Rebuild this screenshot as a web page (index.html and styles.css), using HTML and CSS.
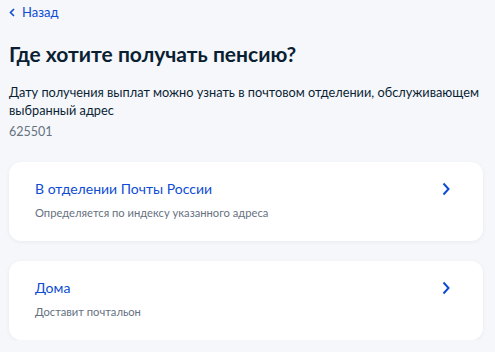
FILE: index.html
```html
<!DOCTYPE html>
<html lang="ru">
<head>
    <meta charset="UTF-8">
    <meta name="viewport" content="width=device-width, initial-scale=1.0">
    <title>Где хотите получать пенсию?</title>
    <link rel="stylesheet" href="styles.css">
</head>
<body>

<div class="page">
    <a class="back-link" href="#">
        <svg class="back-icon" width="6" height="9" viewBox="0 0 6 9">
            <path d="M5 1 L1.5 4.5 L5 8" fill="none" stroke="#0d4cd3" stroke-width="1.6"/>
        </svg>
        Назад
    </a>

    <h1 class="title">Где хотите получать пенсию?</h1>

    <p class="description">
        Дату получения выплат можно узнать в почтовом отделении, обслуживающем выбранный адрес
    </p>
    <div class="postcode">625501</div>

    <div class="options">
        <a class="option-card" href="#">
            <div class="option-text">
                <div class="option-title">В отделении Почты России</div>
                <div class="option-hint">Определяется по индексу указанного адреса</div>
            </div>
            <svg class="chevron" width="8" height="14" viewBox="0 0 8 14">
                <path d="M1.5 1.5 L6.5 7 L1.5 12.5" fill="none" stroke="#0d4cd3" stroke-width="2"/>
            </svg>
        </a>
        <a class="option-card" href="#">
            <div class="option-text">
                <div class="option-title">Дома</div>
                <div class="option-hint">Доставит почтальон</div>
            </div>
            <svg class="chevron" width="8" height="14" viewBox="0 0 8 14">
                <path d="M1.5 1.5 L6.5 7 L1.5 12.5" fill="none" stroke="#0d4cd3" stroke-width="2"/>
            </svg>
        </a>
    </div>
</div>

</body>
</html>
```

FILE: styles.css
```css
body {
    font-family: Lato, "Noto Sans", sans-serif;
    background-color: #f5f7fb;
    color: #0b1f33;
    margin: 0;
    padding: 0;
}

.page {
    padding: 2px 12px 0 9px;
}

.back-link {
    display: flex;
    align-items: center;
    gap: 7px;
    height: 20px;
    font-size: 13px;
    color: #0d4cd3;
    text-decoration: none;
}

/* Heading */
.title {
    font-size: 21px;
    font-weight: bold;
    line-height: 28px;
    margin: 18px 0 0 0;
}

.description {
    font-size: 12.75px;
    line-height: 18px;
    margin: 15px 0 0 0;
}

.postcode {
    font-size: 12.5px;
    line-height: 20px;
    color: #66727f;
    margin-top: 3px;
}

/* Option cards */
.options {
    display: flex;
    flex-direction: column;
    gap: 20px;
    margin-top: 20px;
}

.option-card {
    display: flex;
    justify-content: space-between;
    align-items: flex-start;
    background-color: #fff;
    border-radius: 12px;
    padding: 17px 33px 20px 26px;
    box-shadow: 0 1px 4px rgba(11, 31, 51, 0.06);
    text-decoration: none;
}

.option-title {
    font-size: 14px;
    line-height: 20px;
    color: #0d4cd3;
}

.option-hint {
    font-size: 11.2px;
    line-height: 16px;
    color: #66727f;
    margin-top: 6px;
}

.chevron {
    margin-top: 3px;
}
```
